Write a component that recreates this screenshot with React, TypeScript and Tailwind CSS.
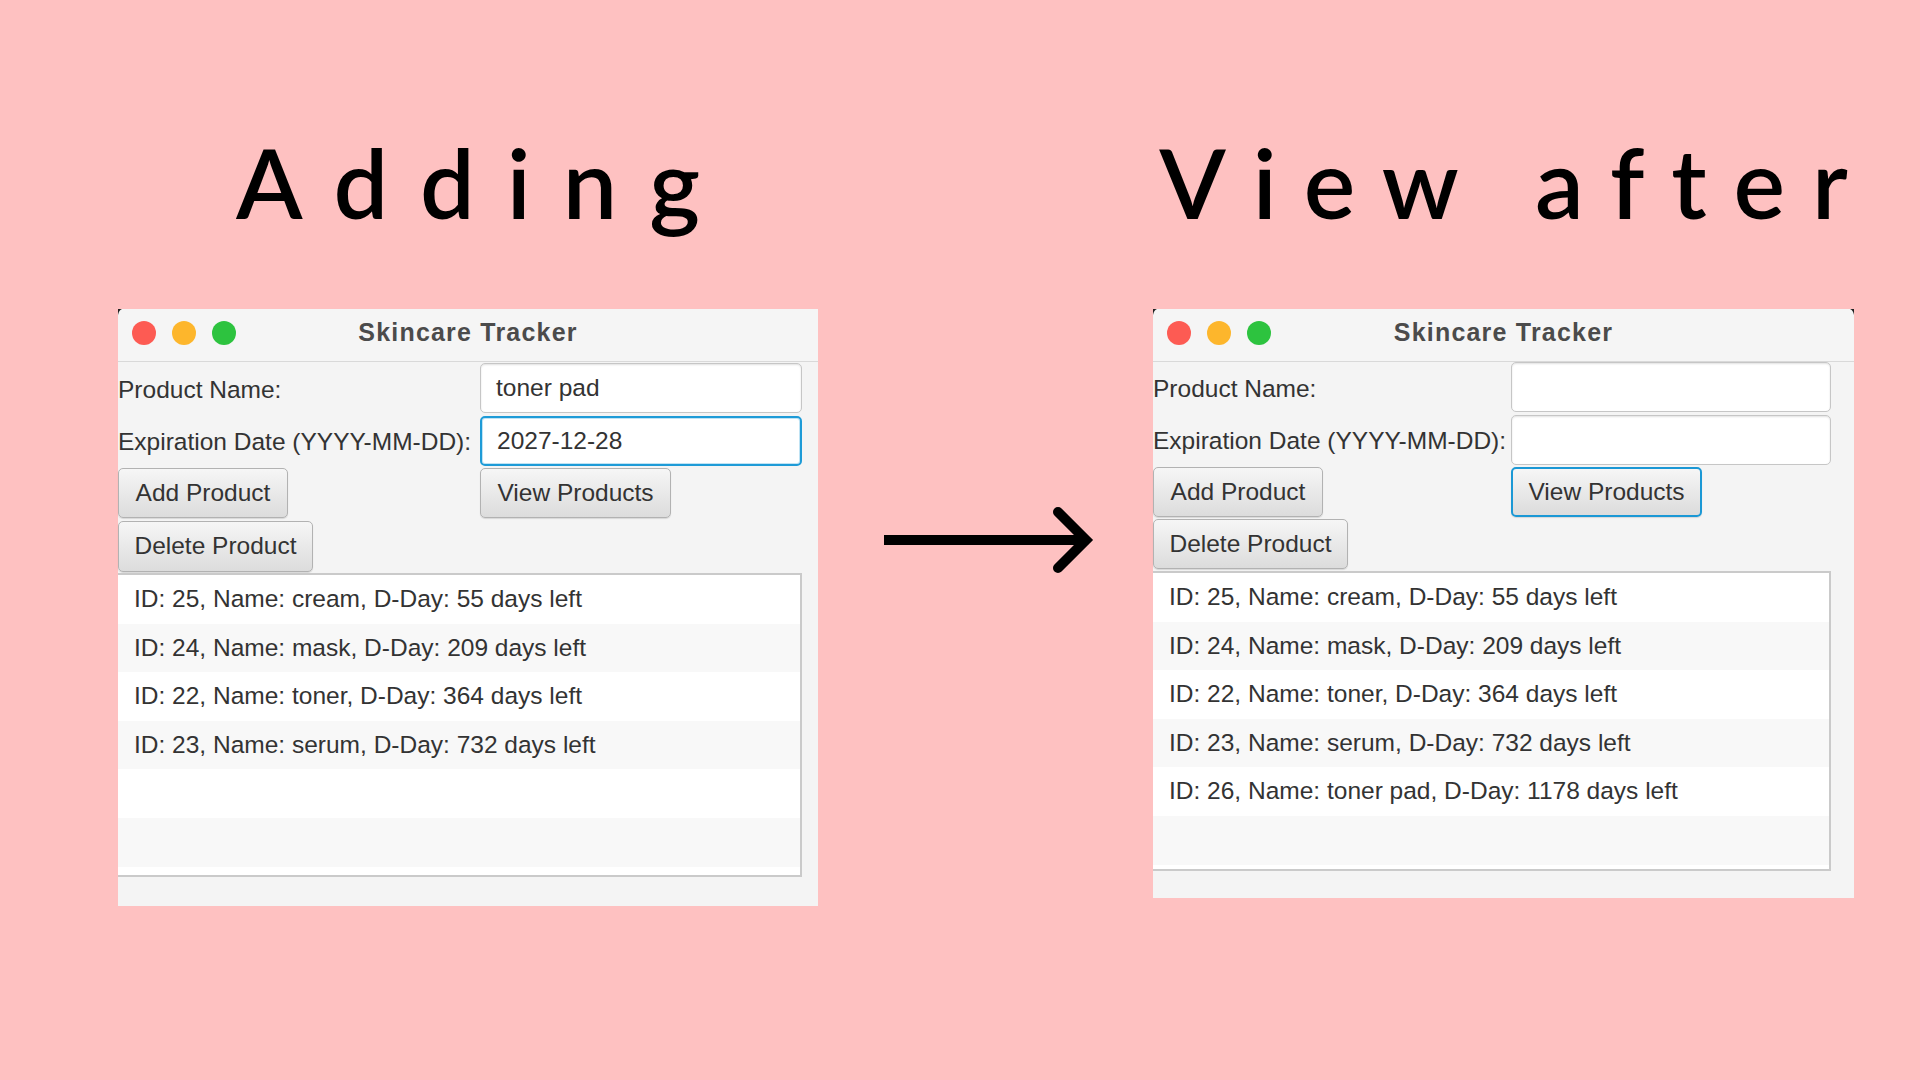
import React from "react";

const ui = "font-['Liberation_Sans',Arial,sans-serif]";

const Lights = () => (
  <div className="flex items-center gap-[16px] pl-[14px]">
    <span className="w-[24px] h-[24px] rounded-full bg-[#fd5b53]" />
    <span className="w-[24px] h-[24px] rounded-full bg-[#fdb62c]" />
    <span className="w-[24px] h-[24px] rounded-full bg-[#2dc33f]" />
  </div>
);

const Field = ({ value, focus }: { value?: string; focus?: boolean }) => (
  <div
    className={`w-full h-full bg-white rounded-[5px] flex items-center pl-[15px] text-[#333] ${
      focus
        ? "border-2 border-[#1e9bd7] shadow-[inset_0_0_0_1px_#bfe3f4]"
        : "border border-[#c6c6c6] shadow-[inset_0_1px_2px_rgba(0,0,0,0.12)]"
    }`}
  >
    {value}
  </div>
);

const Btn = ({ label, w, focus }: { label: string; w: string; focus?: boolean }) => (
  <div
    className={`${w} h-full rounded-[5px] bg-linear-to-b from-[#f6f6f6] to-[#dcdcdc] flex items-center justify-center text-[#333] whitespace-nowrap shadow-[0_1px_1px_rgba(0,0,0,0.12)] ${
      focus ? "border-2 border-[#1b98d5]" : "border border-[#b2b2b2]"
    }`}
  >
    {label}
  </div>
);

const Corner = ({ right }: { right?: boolean }) => (
  <svg
    width="4"
    height="6"
    viewBox="0 0 4 6"
    className={`absolute top-0 ${right ? "right-0 -scale-x-100" : "left-0"}`}
  >
    <path d="M0 0 H4 Q1 1 0 6 Z" fill="#222" />
  </svg>
);

type WinProps = {
  name?: string;
  date?: string;
  focusDate?: boolean;
  focusView?: boolean;
  items: string[];
  compact?: boolean;
};

const Window = ({ name, date, focusDate, focusView, items, compact }: WinProps) => {
  const cols = compact ? "grid-cols-[358px_320px]" : "grid-cols-[362px_322px]";
  const rows = [...items];
  while (rows.length < 6) rows.push("");

  return (
    <div
      className={`relative bg-[#f4f4f4] flex flex-col text-[24.5px] ${ui} ${
        compact ? "w-[701px] pb-[27px]" : "w-[700px] pb-[29px]"
      }`}
    >
      <Corner />
      {compact && <Corner right />}
      <div className="h-[53px] pb-[4px] border-b border-[#d9d9d9] bg-[#f5f5f5] grid grid-cols-[1fr_auto_1fr] items-center">
        <Lights />
        <div className="text-[25px] font-bold tracking-[1.2px] text-[#4b4b4b]">Skincare Tracker</div>
        <div />
      </div>

      <div className={`grid ${cols} h-[50px] ${compact ? "" : "mt-[1px]"}`}>
        <div className="flex items-center pt-[5px] text-[#333] whitespace-nowrap">Product Name:</div>
        <Field value={name} />
      </div>
      <div className={`grid ${cols} h-[50px] mt-[3px]`}>
        <div className="flex items-center pt-[3px] text-[#333] whitespace-nowrap">Expiration Date (YYYY-MM-DD):</div>
        <Field value={date} focus={focusDate} />
      </div>
      <div className={`grid ${cols} h-[50px] mt-[2px]`}>
        <div>
          <Btn label="Add Product" w="w-[170px]" />
        </div>
        <div>
          <Btn label="View Products" w="w-[191px]" focus={focusView} />
        </div>
      </div>
      <div className={`grid ${cols} ${compact ? "h-[50px] mt-[2px]" : "h-[51px] mt-[3px]"}`}>
        <div>
          <Btn label="Delete Product" w="w-[195px]" />
        </div>
      </div>

      <div
        className={`bg-white border-y-2 border-r-2 border-[#cacaca] flex flex-col ${
          compact ? "w-[678px] h-[300px] mt-[2px]" : "w-[684px] h-[304px] mt-[1px]"
        }`}
      >
        {rows.map((t, i) => (
          <div
            key={i}
            className={`h-[48.6px] shrink-0 flex items-center pl-[16px] text-[#333] whitespace-nowrap ${
              i % 2 === 1 ? "bg-[#f8f8f8]" : "bg-white"
            }`}
          >
            {t}
          </div>
        ))}
      </div>
    </div>
  );
};

const base = [
  "ID: 25, Name: cream, D-Day: 55 days left",
  "ID: 24, Name: mask, D-Day: 209 days left",
  "ID: 22, Name: toner, D-Day: 364 days left",
  "ID: 23, Name: serum, D-Day: 732 days left",
];

export default function App() {
  return (
    <div className="w-[1920px] h-[1080px] bg-[#fec1c1] overflow-hidden flex items-start pl-[118px] pt-[133px]">
      <div className="w-[700px] flex flex-col">
        <h1 className="h-[97px] flex justify-center text-[97px] leading-none font-semibold text-black font-['Lato',sans-serif]">
          <span className="whitespace-nowrap pl-[32px] tracking-[32px]">Adding</span>
        </h1>
        <div className="mt-[79px]">
          <Window name="toner pad" date="2027-12-28" focusDate items={base} />
        </div>
      </div>

      <svg width="210" height="80" viewBox="0 0 210 80" className="ml-[66px] mt-[367px] shrink-0">
        <path d="M0 40 H200" stroke="#000" strokeWidth="10" fill="none" />
        <path
          d="M174 12 L202 40 L174 68"
          stroke="#000"
          strokeWidth="10"
          strokeLinecap="round"
          strokeLinejoin="miter"
          fill="none"
        />
      </svg>

      <div className="w-[701px] ml-[59px] flex flex-col">
        <h1 className="h-[97px] flex justify-center text-[97px] leading-none font-semibold text-black font-['Lato',sans-serif]">
          <span className="whitespace-nowrap pl-[27px] tracking-[27px]">View after</span>
        </h1>
        <div className="mt-[79px]">
          <Window
            compact
            focusView
            items={[...base, "ID: 26, Name: toner pad, D-Day: 1178 days left"]}
          />
        </div>
      </div>
    </div>
  );
}
